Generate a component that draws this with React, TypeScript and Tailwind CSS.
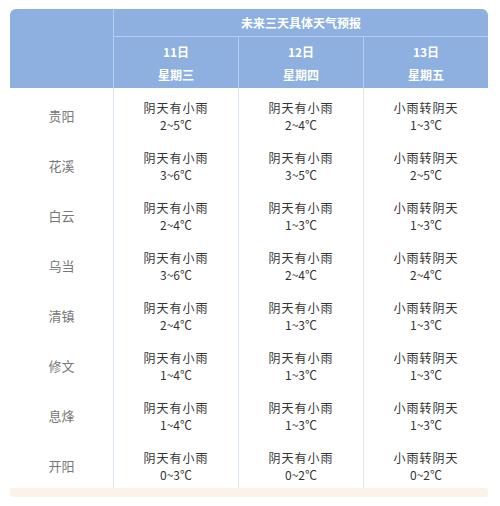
const days = [
  { date: '11日', week: '星期三' },
  { date: '12日', week: '星期四' },
  { date: '13日', week: '星期五' },
];

const rows: { city: string; cells: [string, string][] }[] = [
  { city: '贵阳', cells: [['阴天有小雨', '2~5℃'], ['阴天有小雨', '2~4℃'], ['小雨转阴天', '1~3℃']] },
  { city: '花溪', cells: [['阴天有小雨', '3~6℃'], ['阴天有小雨', '3~5℃'], ['小雨转阴天', '2~5℃']] },
  { city: '白云', cells: [['阴天有小雨', '2~4℃'], ['阴天有小雨', '1~3℃'], ['小雨转阴天', '1~3℃']] },
  { city: '乌当', cells: [['阴天有小雨', '3~6℃'], ['阴天有小雨', '2~4℃'], ['小雨转阴天', '2~4℃']] },
  { city: '清镇', cells: [['阴天有小雨', '2~4℃'], ['阴天有小雨', '1~3℃'], ['小雨转阴天', '1~3℃']] },
  { city: '修文', cells: [['阴天有小雨', '1~4℃'], ['阴天有小雨', '1~3℃'], ['小雨转阴天', '1~3℃']] },
  { city: '息烽', cells: [['阴天有小雨', '1~4℃'], ['阴天有小雨', '1~3℃'], ['小雨转阴天', '1~3℃']] },
  { city: '开阳', cells: [['阴天有小雨', '0~3℃'], ['阴天有小雨', '0~2℃'], ['小雨转阴天', '0~2℃']] },
];

export default function App() {
  return (
    <div
      className="w-[500px] h-[506px] bg-white pt-[9px] pl-[10px]"
      style={{ fontFamily: '"Noto Sans CJK SC", "Noto Sans", sans-serif' }}
    >
      <div className="w-[478px]">
        {/* header */}
        <div className="grid grid-cols-[104px_125px_125px_124px] bg-[#8db0e0] rounded-t-[6px] text-white font-bold text-[12px]">
          <div className="row-span-2 border-r border-[#b4cdef]" />
          <div className="col-span-3 h-[28px] flex items-center justify-center border-b border-[#b4cdef]">
            未来三天具体天气预报
          </div>
          {days.map((d, i) => (
            <div
              key={d.date}
              className={`h-[51px] flex flex-col items-center justify-center gap-[5px] leading-[18px] pt-[2px] ${i < 2 ? 'border-r border-[#b4cdef]' : ''}`}
            >
              <span>{d.date}</span>
              <span>{d.week}</span>
            </div>
          ))}
        </div>

        {/* body */}
        <div className="grid grid-cols-[104px_125px_125px_124px]">
          {rows.map((r) => (
            <div key={r.city} className="contents">
              <div className="h-[50px] flex items-center justify-center text-[13px] text-[#777] border-r border-[#d8e6f3] pt-[5px]">
                {r.city}
              </div>
              {r.cells.map((c, i) => (
                <div
                  key={i}
                  className={`h-[50px] flex flex-col items-center justify-center text-[12px] text-[#333] leading-[17px] pt-[5px] ${i < 2 ? 'border-r border-[#d8e6f3]' : ''}`}
                >
                  <span className="tracking-[1px]">{c[0]}</span>
                  <span>{c[1]}</span>
                </div>
              ))}
            </div>
          ))}
        </div>

        <div className="h-[9px] bg-[#fdf2e8] rounded-[3px]" />
      </div>
    </div>
  );
}
